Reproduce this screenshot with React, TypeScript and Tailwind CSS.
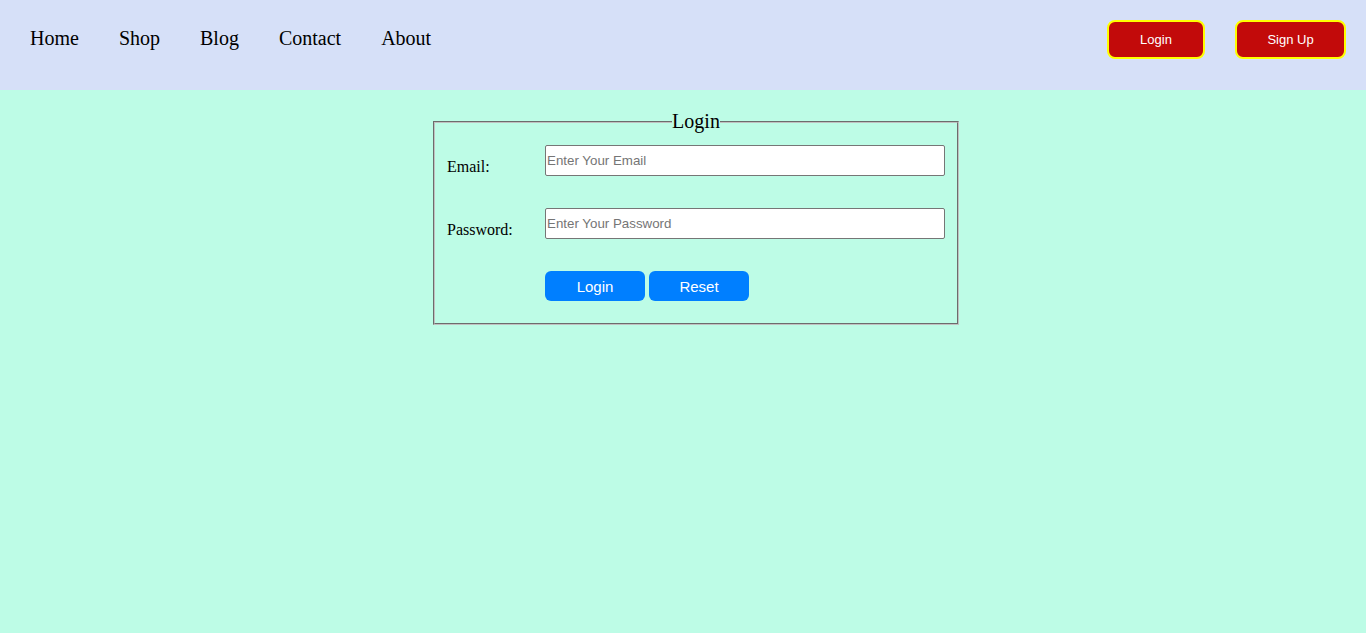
import React from 'react';

const navLinks = ['Home', 'Shop', 'Blog', 'Contact', 'About'];

const serif = "font-['Liberation_Serif','Times_New_Roman',serif]";
const sans = "font-['Liberation_Sans',Arial,sans-serif]";

export default function App() {
  return (
    <div className="min-h-[633px] bg-[#bdfce6] text-black">
      {/* Top navigation */}
      <nav className="flex h-[90px] items-start justify-between bg-[#d6e0f8]">
        <ul className={`flex gap-[40px] pl-[30px] pt-[27px] text-[20px] leading-[23px] ${serif}`}>
          {navLinks.map((link) => (
            <li key={link}>
              <a href="#" className="text-black">
                {link}
              </a>
            </li>
          ))}
        </ul>
        <div className={`flex gap-[30px] pr-[20px] pt-[20px] text-[13px] text-white ${sans}`}>
          <button className="h-[39px] w-[98px] rounded-[8px] border-2 border-[#ffff00] bg-[#c20a0a]">
            Login
          </button>
          <button className="h-[39px] w-[111px] rounded-[8px] border-2 border-[#ffff00] bg-[#c20a0a]">
            Sign Up
          </button>
        </div>
      </nav>

      {/* Login form */}
      <form className="pt-[20px]">
        <fieldset className="ml-[433px] w-[525px] border-2 border-[#c0c0c0] px-[12px] pb-[22px] pt-[12px] [border-style:groove]">
          <legend className={`mx-auto px-0 text-[20px] leading-[23px] ${serif}`}>Login</legend>

          <div className="flex items-start">
            <label htmlFor="email" className={`mt-[13px] w-[98px] text-[16px] leading-[18px] ${serif}`}>
              Email:
            </label>
            <input
              id="email"
              type="email"
              placeholder="Enter Your Email"
              className={`h-[31px] w-[400px] rounded-[2px] border border-[#767676] bg-white px-[1px] text-[13.33px] placeholder:text-[#757575] ${sans}`}
            />
          </div>

          <div className="mt-[32px] flex items-start">
            <label htmlFor="password" className={`mt-[13px] w-[98px] text-[16px] leading-[18px] ${serif}`}>
              Password:
            </label>
            <input
              id="password"
              type="password"
              placeholder="Enter Your Password"
              className={`h-[31px] w-[400px] rounded-[2px] border border-[#767676] bg-white px-[1px] text-[13.33px] placeholder:text-[#757575] ${sans}`}
            />
          </div>

          <div className={`ml-[98px] mt-[32px] flex gap-[4px] text-[15px] text-white ${sans}`}>
            <button type="submit" className="h-[30px] w-[100px] rounded-[6px] bg-[#007fff] pt-[3px]">
              Login
            </button>
            <button type="reset" className="h-[30px] w-[100px] rounded-[6px] bg-[#007fff] pt-[3px]">
              Reset
            </button>
          </div>
        </fieldset>
      </form>
    </div>
  );
}
